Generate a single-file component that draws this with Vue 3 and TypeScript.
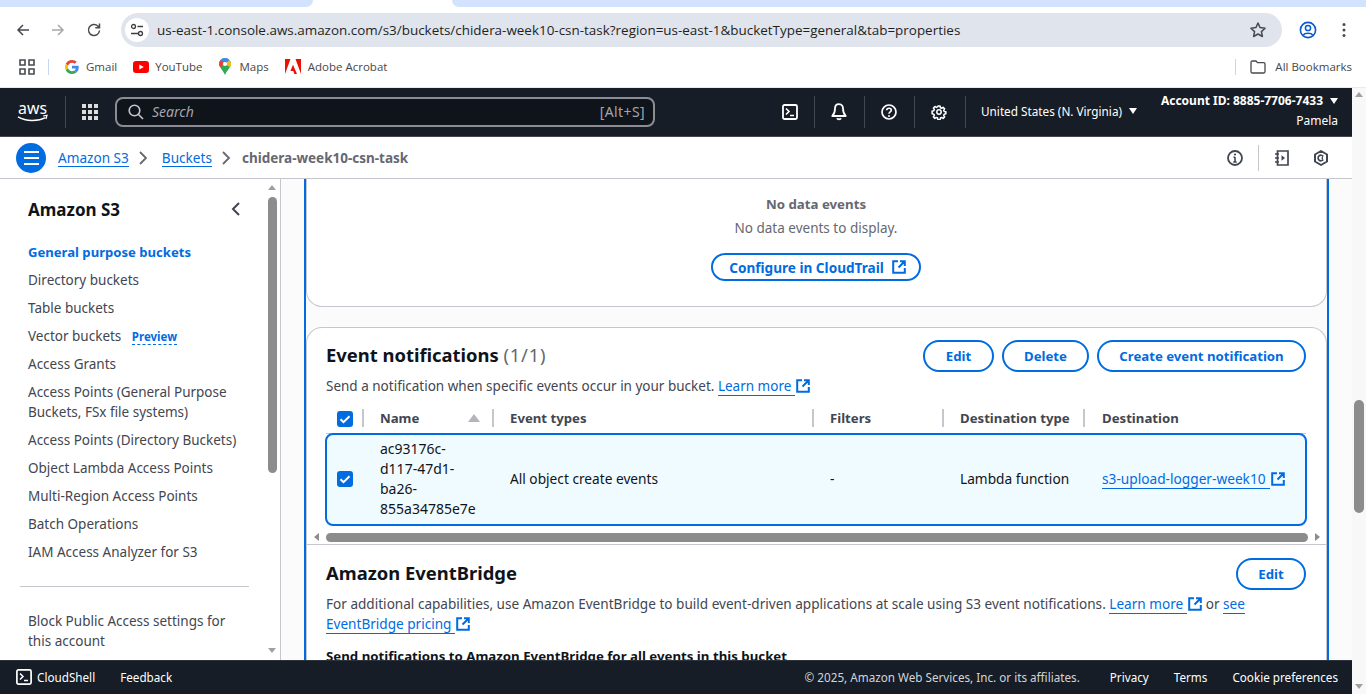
<script setup lang="ts">
const bookmarks = ['Gmail', 'YouTube', 'Maps', 'Adobe Acrobat']
const navA = ['Directory buckets', 'Table buckets']
const navB = [
  'Access Grants',
  'Access Points (General Purpose Buckets, FSx file systems)',
  'Access Points (Directory Buckets)',
  'Object Lambda Access Points',
  'Multi-Region Access Points',
  'Batch Operations',
  'IAM Access Analyzer for S3',
]
const heads = ['Event types', 'Filters', 'Destination type', 'Destination']
</script>

<template>
  <div class="page">
    <div class="tabs"><div class="tab-left"></div><div class="tab-active"></div><div class="tab-right"></div></div>
    <div class="toolbar">
      <svg class="nav-ic" width="16" height="16" viewBox="0 0 16 16"><path d="M14 8H3M8 3 3 8l5 5" fill="none" stroke="#474a4f" stroke-width="1.5"/></svg>
      <svg class="nav-ic" width="16" height="16" viewBox="0 0 16 16"><path d="M2 8h11M8 3l5 5-5 5" fill="none" stroke="#a6a8ab" stroke-width="1.5"/></svg>
      <svg class="nav-ic" width="16" height="16" viewBox="0 0 16 16"><path d="M13.500 8.500A5.500 5.500 0 1 1 11.800 4L13.500 5.600M13.500 1.500v4.200H9.300" fill="none" stroke="#474a4f" stroke-width="1.5"/></svg>
      <div class="omnibox">
        <span class="tune"><svg width="16" height="16" viewBox="0 0 16 16"><circle cx="4.500" cy="4.500" r="2" fill="none" stroke="#3c4043" stroke-width="1.300"/><path d="M8.500 4.500H14M2 11.500h7" stroke="#3c4043" stroke-width="1.300"/><circle cx="11.500" cy="11.500" r="2" fill="none" stroke="#3c4043" stroke-width="1.300"/></svg></span>
        <span class="url">us-east-1.console.aws.amazon.com/s3/buckets/chidera-week10-csn-task?region=us-east-1&amp;bucketType=general&amp;tab=properties</span>
        <svg class="star" width="18" height="18" viewBox="0 0 18 18"><path d="m9 2 2.100 4.600 5 .6-3.700 3.400 1 4.900L9 13l-4.400 2.500 1-4.900-3.700-3.400 5-.6z" fill="none" stroke="#474a4f" stroke-width="1.500" stroke-linejoin="round"/></svg>
      </div>
      <svg class="profile" width="18" height="18" viewBox="0 0 18 18"><circle cx="9" cy="9" r="7.600" fill="none" stroke="#0b57d0" stroke-width="1.600"/><circle cx="9" cy="7" r="2.600" fill="none" stroke="#0b57d0" stroke-width="1.500"/><path d="M4.500 14c1-2.400 8-2.400 9 0" fill="none" stroke="#0b57d0" stroke-width="1.500"/></svg>
      <svg class="kebab" width="4" height="16" viewBox="0 0 4 16"><circle cx="2" cy="2.500" r="1.500" fill="#474a4f"/><circle cx="2" cy="8" r="1.500" fill="#474a4f"/><circle cx="2" cy="13.500" r="1.500" fill="#474a4f"/></svg>
    </div>
    <div class="bookmarks">
      <svg class="apps" width="16" height="16" viewBox="0 0 16 16"><path d="M1 1h5v5H1zM10 1h5v5h-5zM1 10h5v5H1zM10 10h5v5h-5z" fill="none" stroke="#474a4f" stroke-width="1.600"/></svg>
      <span class="bm-sep"></span>
      <template v-for="(b, i) in bookmarks" :key="b">
        <span class="bm" :class="'bm' + i">
          <svg v-if="i === 0" width="14" height="14" viewBox="0 0 48 48"><path fill="#ea4335" d="M24 9.500c3.500 0 6.700 1.200 9.200 3.600l6.900-6.900C35.900 2.400 30.500 0 24 0 14.600 0 6.500 5.400 2.600 13.200l8 6.200C12.500 13.700 17.800 9.500 24 9.500z"/><path fill="#4285f4" d="M47 24.500c0-1.600-.1-3.100-.4-4.500H24v9h12.900c-.6 3-2.200 5.500-4.700 7.200l7.700 6C44.400 37.900 47 31.800 47 24.500z"/><path fill="#fbbc05" d="M10.500 28.600C10 27.200 9.800 25.600 9.800 24s.3-3.200.8-4.600l-8-6.200C1 16.400 0 20.100 0 24s1 7.600 2.600 10.800z"/><path fill="#34a853" d="M24 48c6.500 0 11.900-2.100 15.900-5.800l-7.700-6c-2.200 1.500-4.900 2.300-8.200 2.300-6.200 0-11.500-4.200-13.400-9.900l-8 6.200C6.500 42.600 14.600 48 24 48z"/></svg>
          <svg v-else-if="i === 1" width="16" height="12" viewBox="0 0 16 12"><rect width="16" height="12" rx="3" fill="#f00"/><path d="m6.300 3.400 4.500 2.600-4.500 2.600z" fill="#fff"/></svg>
          <svg v-else-if="i === 2" width="12" height="17" viewBox="0 0 12 17"><path d="M6 0a6 6 0 0 1 6 6c0 3.200-3.800 6-6 11C3.800 12 0 9.200 0 6a6 6 0 0 1 6-6z" fill="#34a853"/><path d="M1.500 1.900 6 6l-4.800 3C.4 8 0 7 0 6a6 6 0 0 1 1.500-4.100z" fill="#ea4335"/><path d="M1.500 1.900A6 6 0 0 1 6 0c1.800 0 3.300.8 4.400 2L6 6z" fill="#4285f4"/><path d="M10.400 2A6 6 0 0 1 12 6c0 1-.4 2-1 3L6 6z" fill="#fbbc05"/><circle cx="6" cy="6" r="2.100" fill="#fff"/></svg>
          <svg v-else width="16" height="16" viewBox="0 0 16 16"><path d="M0 0h5.500L0 15zM10.500 0H16v15zM8 5.800 12 15H9.400L8.200 12H5.400z" fill="#eb1000"/></svg>
          <span>{{ b }}</span>
        </span>
      </template>
      <span class="bm-right">
        <span class="bm-sep"></span>
        <svg class="folder" width="16" height="14" viewBox="0 0 16 14"><path d="M1 2.500C1 1.700 1.500 1 2.300 1h3.700l1.500 1.700h6.300c.7 0 1.200.6 1.200 1.300v7.500c0 .8-.5 1.500-1.200 1.500H2.300C1.500 13 1 12.300 1 11.500z" fill="none" stroke="#474a4f" stroke-width="1.300"/></svg>
        <span class="all">All Bookmarks</span>
      </span>
    </div>

    <div class="viewport">
      <div class="app">
        <header class="topbar">
          <svg class="aws" width="32" height="34" viewBox="0 -6 32 34">
            <text x="1" y="13" font-family="Noto Sans, sans-serif" font-size="16" fill="#fff" textLength="29" lengthAdjust="spacingAndGlyphs">aws</text>
            <path d="M1 15.800c8 4.800 20 4.800 27.500.8" fill="none" stroke="#fff" stroke-width="1.500"/>
            <path d="m26 15 4-.7-1 3.700" fill="none" stroke="#fff" stroke-width="1.200"/>
          </svg>
          <span class="tb-sep sep-a"></span>
          <svg class="grid9" width="16" height="16" viewBox="0 0 16 16" fill="#ddd"><rect width="4" height="4"/><rect x="6" width="4" height="4"/><rect x="12" width="4" height="4"/><rect y="6" width="4" height="4"/><rect x="6" y="6" width="4" height="4"/><rect x="12" y="6" width="4" height="4"/><rect y="12" width="4" height="4"/><rect x="6" y="12" width="4" height="4"/><rect x="12" y="12" width="4" height="4"/></svg>
          <div class="search">
            <svg width="16" height="16" viewBox="0 0 16 16"><circle cx="6.500" cy="6.500" r="5.300" fill="none" stroke="#c6c6cd" stroke-width="1.600"/><path d="m10.500 10.500 4.500 4.500" stroke="#c6c6cd" stroke-width="1.600"/></svg>
            <span class="s-label">Search</span>
            <span class="s-key">[Alt+S]</span>
          </div>
          <div class="tb-icons">
            <span class="tb-ic"><svg width="16" height="16" viewBox="0 0 16 16"><rect x="1" y="1" width="14" height="14" rx="1.500" fill="none" stroke="#fff" stroke-width="1.800"/><path d="m4 4.500 3 3-3 3M8 11.500h4" fill="none" stroke="#fff" stroke-width="1.600"/></svg></span>
            <span class="tb-ic sep"><svg width="16" height="18" viewBox="0 0 16 18"><path d="M8 1.200c-2.800 0-4 2-4 4.300 0 3.500-.7 5.500-2.700 7.500h13.400c-2-2-2.700-4-2.700-7.500 0-2.300-1.200-4.300-4-4.300zM6 15.200c.5 1.400 3.500 1.400 4 0" fill="none" stroke="#fff" stroke-width="1.800" stroke-linejoin="round"/></svg></span>
            <span class="tb-ic sep"><svg width="16" height="16" viewBox="0 0 16 16"><circle cx="8" cy="8" r="7" fill="none" stroke="#fff" stroke-width="1.700"/><path d="M5.700 6.200C5.800 3.500 10.300 3.500 10.300 6.200c0 1.800-2.300 1.700-2.300 3.600" fill="none" stroke="#fff" stroke-width="1.600"/><circle cx="8" cy="12" r="1" fill="#fff"/></svg></span>
            <span class="tb-ic sep"><svg width="16" height="16" viewBox="0 0 16 16"><path d="M6.700 1h2.600l.4 2 1.400.6 1.700-1.100 1.800 1.800-1.100 1.700.6 1.400 2 .4v2.400l-2 .4-.6 1.400 1.100 1.700-1.800 1.800-1.700-1.100-1.400.6-.4 2H6.700l-.4-2-1.400-.6-1.700 1.100-1.800-1.800 1.100-1.700-.6-1.400-2-.4V6.800l2-.4.6-1.400-1.100-1.700 1.800-1.800 1.700 1.100 1.400-.6z" transform="translate(1.200 1.200) scale(.85)" fill="none" stroke="#fff" stroke-width="1.800" stroke-linejoin="round"/><circle cx="8" cy="8" r="2.200" fill="none" stroke="#fff" stroke-width="1.500"/></svg></span>
            <span class="tb-sep"></span>
          </div>
          <div class="region">United States (N. Virginia)<i class="tri"></i></div>
          <div class="account">
            <div class="acc-id">Account ID: 8885-7706-7433<i class="tri"></i></div>
            <div class="acc-name">Pamela</div>
          </div>
        </header>

        <div class="crumbs">
          <span class="burger"><i></i><i></i><i></i></span>
          <a class="crumb">Amazon S3</a>
          <svg class="chev" width="10" height="16" viewBox="0 0 10 16"><path d="m2 2 6 6-6 6" fill="none" stroke="#656871" stroke-width="1.800"/></svg>
          <a class="crumb">Buckets</a>
          <svg class="chev chev2" width="10" height="16" viewBox="0 0 10 16"><path d="m2 2 6 6-6 6" fill="none" stroke="#656871" stroke-width="1.800"/></svg>
          <span class="crumb-cur">chidera-week10-csn-task</span>
          <span class="cr-right">
            <svg width="16" height="16" viewBox="0 0 16 16"><circle cx="8" cy="8" r="7" fill="none" stroke="#424650" stroke-width="1.800"/><path d="M8 7v5M6.500 7.200H8M6.300 12h3.400" fill="none" stroke="#424650" stroke-width="1.600"/><circle cx="8" cy="4.500" r="1.100" fill="#424650"/></svg>
            <span class="cr-sep"></span>
            <svg width="16" height="16" viewBox="0 0 16 16"><path d="M3.500 1H14v14H3.500zM1 4h4M1 8h4M1 12h4" fill="none" stroke="#424650" stroke-width="1.700"/><path d="M7.500 5.200 11 8l-3.500 2.800z" fill="#424650"/></svg>
            <svg class="cr-last" width="16" height="16" viewBox="0 0 16 16"><path d="M8 1 14 4.500v7L8 15l-6-3.500v-7z" fill="none" stroke="#424650" stroke-width="2" stroke-linejoin="round"/><path d="M10.200 6.400A2.800 2.800 0 1 0 10.200 9.600" fill="none" stroke="#424650" stroke-width="1.700"/><path d="M10 6.500 8 8l2 1.500" fill="#424650"/></svg>
          </span>
        </div>

        <div class="body">
          <aside class="sidebar">
            <div class="side-inner">
              <div class="side-head">
                <h2>Amazon S3</h2>
                <svg width="10" height="14" viewBox="0 0 10 14"><path d="M8 1 2 7l6 6" fill="none" stroke="#424650" stroke-width="2"/></svg>
              </div>
              <ul class="nav">
                <li class="active">General purpose buckets</li>
                <li v-for="n in navA" :key="n">{{ n }}</li>
                <li>Vector buckets <span class="preview">Preview</span></li>
                <li v-for="n in navB" :key="n">{{ n }}</li>
              </ul>
              <div class="side-div"></div>
              <div class="side-block">Block Public Access settings for<br>this account</div>
            </div>
            <div class="side-scroll">
              <i class="arr up"></i>
              <i class="thumb"></i>
              <i class="arr down"></i>
            </div>
          </aside>

          <main class="content">
            <div class="frame">
              <section class="card empty-card">
                <div class="em-title">No data events</div>
                <div class="em-text">No data events to display.</div>
                <button class="btn cfg">Configure in CloudTrail
                  <svg class="ext" width="14" height="14" viewBox="0 0 14 14"><path d="M6 1.200H1.200v11.600h11.600V8M8 1.200h4.800V6M12.500 1.500 6.500 7.500" fill="none" stroke="currentColor" stroke-width="2"/></svg>
                </button>
              </section>

              <section class="card ev-card">
                <div class="ev-head">
                  <h2 class="h2">Event notifications <span class="count">(1/1)</span></h2>
                  <div class="btns">
                    <button class="btn b-edit">Edit</button>
                    <button class="btn b-del">Delete</button>
                    <button class="btn b-create">Create event notification</button>
                  </div>
                </div>
                <p class="desc ev-desc">Send a notification when specific events occur in your bucket. <a class="lnk"><span class="u">Learn more</span><svg class="ext" width="14" height="14" viewBox="0 0 14 14"><path d="M6 1.200H1.200v11.600h11.600V8M8 1.200h4.800V6M12.500 1.500 6.500 7.500" fill="none" stroke="#006ce0" stroke-width="2"/></svg></a></p>
                <div class="thead grid">
                  <div class="cell c0"><span class="cb"><svg width="16" height="16" viewBox="0 0 16 16"><path d="m3.500 8.200 3 3 6-6" fill="none" stroke="#fff" stroke-width="2"/></svg></span></div>
                  <div class="cell th"><span>Name</span><i class="sort"></i></div>
                  <div v-for="h in heads" :key="h" class="cell th">{{ h }}</div>
                </div>
                <div class="trow grid">
                  <div class="cell c0"><span class="cb"><svg width="16" height="16" viewBox="0 0 16 16"><path d="m3.500 8.200 3 3 6-6" fill="none" stroke="#fff" stroke-width="2"/></svg></span></div>
                  <div class="cell td nm">ac93176c-<br>d117-47d1-<br>ba26-<br>855a34785e7e</div>
                  <div class="cell td">All object create events</div>
                  <div class="cell td">-</div>
                  <div class="cell td">Lambda function</div>
                  <div class="cell td"><a class="lnk"><span class="u">s3-upload-logger-week10</span><svg class="ext" width="14" height="14" viewBox="0 0 14 14"><path d="M6 1.200H1.200v11.600h11.600V8M8 1.200h4.800V6M12.500 1.500 6.500 7.500" fill="none" stroke="#006ce0" stroke-width="2"/></svg></a></div>
                </div>
                <div class="hscroll"><i class="h-l"></i><i class="h-thumb"></i><i class="h-r"></i></div>
                <div class="ev-rule"></div>
                <div class="eb-head">
                  <h2 class="h2">Amazon EventBridge</h2>
                  <button class="btn b-edit2">Edit</button>
                </div>
                <p class="desc eb-desc">For additional capabilities, use Amazon EventBridge to build event-driven applications at scale using S3 event notifications. <a class="lnk"><span class="u">Learn more</span><svg class="ext" width="14" height="14" viewBox="0 0 14 14"><path d="M6 1.200H1.200v11.600h11.600V8M8 1.200h4.800V6M12.500 1.500 6.500 7.500" fill="none" stroke="#006ce0" stroke-width="2"/></svg></a> or <a class="lnk"><span class="u plain">see</span></a><br><a class="lnk"><span class="u">EventBridge pricing</span><svg class="ext" width="14" height="14" viewBox="0 0 14 14"><path d="M6 1.200H1.200v11.600h11.600V8M8 1.200h4.800V6M12.500 1.500 6.500 7.500" fill="none" stroke="#006ce0" stroke-width="2"/></svg></a></p>
                <div class="eb-strong">Send notifications to Amazon EventBridge for all events in this bucket</div>
              </section>
            </div>
          </main>
        </div>

        <footer class="footer">
          <svg width="16" height="16" viewBox="0 0 16 16"><rect x=".9" y=".9" width="14.200" height="14.200" rx="1.500" fill="none" stroke="#fff" stroke-width="1.700"/><path d="m4 4.500 3 3-3 3M8 11.500h4" fill="none" stroke="#fff" stroke-width="1.500"/></svg>
          <span class="f-cs">CloudShell</span>
          <span class="f-fb">Feedback</span>
          <span class="f-right">
            <span class="copy">© 2025, Amazon Web Services, Inc. or its affiliates.</span>
            <span>Privacy</span><span>Terms</span><span>Cookie preferences</span>
          </span>
        </footer>
      </div>
      <div class="page-scroll">
        <i class="ps-up"></i>
        <i class="ps-thumb"></i>
        <i class="ps-down"></i>
      </div>
    </div>
  </div>
</template>

<style>
html, body { margin: 0; overflow: hidden; background: #fff; }
</style>

<style scoped>
.page { width: 1366px; height: 694px; display: flex; flex-direction: column; overflow: hidden; font-family: "Noto Sans", sans-serif; color: #0f141a; }
button { font-family: inherit; }
h2, p, ul { margin: 0; padding: 0; }
i { display: block; font-style: normal; }

.tabs { height: 7px; display: flex; background: #fff; flex: none; }
.tab-left { width: 313px; background: #d3e3fd; border-bottom-right-radius: 8px; }
.tab-active { width: 139px; background: #fff; }
.tab-right { flex: 1; background: #d3e3fd; border-bottom-left-radius: 8px; }

.toolbar { height: 46px; flex: none; display: flex; align-items: center; padding-left: 15px; }
.nav-ic { margin-right: 19px; }
.nav-ic:nth-child(2) { margin-right: 20px; }
.nav-ic:nth-child(3) { margin-right: 19px; }
.omnibox { width: 1161px; height: 34px; border-radius: 17px; background: #e0e5ed; display: flex; align-items: center; padding-left: 4px; box-sizing: border-box; }
.tune { width: 24px; height: 24px; border-radius: 50%; background: #fff; display: flex; align-items: center; justify-content: center; }
.url { margin-left: 8px; font-family: "Open Sans", sans-serif; font-size: 13.45px; color: #1f1f1f; white-space: nowrap; flex: 1; }
.star { margin-right: 15px; }
.profile { margin-left: 17px; }
.kebab { margin-left: 25px; }

.bookmarks { height: 35px; flex: none; display: flex; align-items: center; padding: 0 0 7px 19px; font-family: "Open Sans", sans-serif; font-size: 11.5px; color: #474747; border-bottom: 1px solid #e8eaed; box-sizing: border-box; }
.bm-sep { width: 1px; height: 16px; background: #c7d7f2; margin-left: 13px; }
.bm { display: inline-flex; align-items: center; gap: 7px; white-space: nowrap; }
.bm0 { margin-left: 16px; }
.bm1 { margin-left: 16px; gap: 6px; }
.bm2 { margin-left: 16px; gap: 9px; }
.bm3 { margin-left: 16px; gap: 7px; }
.bm-right { margin-left: auto; display: flex; align-items: center; padding-right: 14px; }
.folder { margin-left: 14px; }
.all { margin-left: 9px; }

.viewport { flex: 1; min-height: 0; display: flex; }
.app { width: 1352px; flex: none; display: flex; flex-direction: column; min-height: 0; }

.topbar { height: 49px; flex: none; background: #161d26; border-bottom: 1px solid #424650; box-sizing: border-box; display: flex; align-items: center; color: #fff; padding-left: 17px; }
.aws { flex: none; }
.tb-sep { width: 1px; height: 32px; background: #424650; display: block; }
.sep-a { margin-left: 16px; }
.grid9 { margin-left: 16px; }
.search { margin-left: 17px; width: 540px; height: 30px; box-sizing: border-box; border: 2px solid #8c8c94; border-radius: 8px; background: #0f141a; display: flex; align-items: center; padding: 0 8px 0 11px; color: #a4a4ad; font-size: 14px; }
.s-label { margin: -2px 0 0 8px; font-style: italic; }
.s-key { margin: -2px 0 0 auto; letter-spacing: .4px; }
.tb-icons { display: flex; align-items: center; margin-left: 110px; }
.tb-ic { width: 50px; height: 32px; display: flex; align-items: center; justify-content: center; margin-left: -1px; }
.tb-ic:first-child { margin-left: 0; }
.tb-ic.sep { border-left: 1px solid #424650; width: 48px; padding-right: 2px; }
.region { margin: -2px 0 0 15px; font-size: 11.75px; white-space: nowrap; display: flex; align-items: center; gap: 7px; color: #fff; }
.tri { width: 0; height: 0; border-left: 4px solid transparent; border-right: 4px solid transparent; border-top: 6px solid #fff; display: inline-block; }
.account { margin-left: auto; padding-right: 14px; text-align: right; font-size: 12px; }
.acc-id { font-weight: 700; display: flex; align-items: center; gap: 7px; line-height: 18px; white-space: nowrap; margin-top: -1px; }
.acc-name { line-height: 21px; }

.crumbs { height: 42px; flex: none; background: #fff; border-bottom: 1px solid #c6c6cd; box-sizing: border-box; display: flex; align-items: center; padding-left: 16px; font-size: 13.6px; }
.burger { width: 30px; height: 30px; border-radius: 50%; background: #006ce0; display: flex; flex-direction: column; align-items: center; justify-content: center; gap: 4px; }
.burger i { width: 15px; height: 2px; background: #fff; }
.crumb { color: #006ce0; border-bottom: 1px solid #006ce0; line-height: 17px; white-space: nowrap; }
.crumb:nth-of-type(1) { margin-left: 12px; }
.chev { margin: 0 14px 0 9px; }
.chev2 { margin-right: 11px; }
.crumb-cur { font-weight: 700; font-size: 13.5px; color: #656871; white-space: nowrap; }
.cr-right { margin-left: auto; display: flex; align-items: center; padding-right: 23px; }
.cr-sep { width: 1px; height: 26px; background: #c6c6cd; margin: 0 15px 0 15px; }
.cr-last { margin-left: 23px; }

.body { flex: 1; min-height: 0; display: flex; }
.sidebar { width: 281px; flex: none; border-right: 1px solid #c6c6cd; box-sizing: border-box; position: relative; overflow: hidden; background: #fff; }
.side-inner { padding: 19px 0 0 28px; width: 225px; font-size: 13.5px; color: #424650; box-sizing: content-box; }
.side-head { display: flex; align-items: center; justify-content: space-between; height: 22px; }
.side-head h2 { font-size: 17px; font-weight: 700; color: #0f141a; white-space: nowrap; }
.side-head svg { margin-right: 12px; }
.nav { list-style: none; margin-top: 18px; }
.nav li { padding: 4px 0; line-height: 20px; }
.nav li.active { color: #006ce0; font-weight: 700; font-size: 13.1px; }
.preview { display: inline-block; line-height: 14px; color: #006ce0; font-size: 11.5px; font-weight: 700; border-bottom: 1px dashed #006ce0; margin-left: 7px; }
.side-div { height: 1px; background: #c6c6cd; margin: 20px 0 0 -8px; width: 229px; }
.side-block { margin-top: 24px; line-height: 20px; white-space: nowrap; }
.side-scroll { position: absolute; top: 0; bottom: 0; left: 268px; width: 9px; background: #fff; }
.arr { position: absolute; left: 0; width: 0; height: 0; border-left: 4.500px solid transparent; border-right: 4.500px solid transparent; }
.arr.up { top: 6px; border-bottom: 5px solid #a0a0a0; }
.arr.down { bottom: 7px; border-top: 5px solid #a0a0a0; }
.thumb { position: absolute; top: 18px; left: 0; width: 9px; height: 276px; border-radius: 5px; background: #8c8c8c; }

.content { flex: 1; min-width: 0; background: #fbfbfb; overflow: hidden; padding: 0 23px; }
.frame { border-left: 2px solid #006ce0; border-right: 2px solid #006ce0; height: 100%; box-sizing: border-box; overflow: hidden; }
.card { background: #fff; border: 1px solid #c6c6cd; box-sizing: border-box; }
.empty-card { height: 128px; border-top: none; border-radius: 0 0 16px 16px; display: flex; flex-direction: column; align-items: center; padding: 15px 1px 0 0; color: #656871; font-size: 13.5px; }
.em-title { font-size: 13.25px; font-weight: 700; line-height: 20px; }
.em-text { line-height: 20px; margin-top: 4px; }
.btn { border: 2px solid #006ce0; border-radius: 20px; background: #fff; color: #006ce0; font-size: 13.2px; font-weight: 700; height: 32px; padding: 0; white-space: nowrap; box-sizing: border-box; display: inline-flex; align-items: center; justify-content: center; }
.cfg { margin-top: 15px; width: 210px; height: 28px; font-size: 13.6px; padding-left: 3px; }
.cfg .ext { margin-left: 8px; }
.ev-card { margin-top: 20px; border-radius: 16px 16px 0 0; padding: 0 20px 0 19px; height: 340px; border-bottom: none; }
.ev-head { display: flex; justify-content: space-between; align-items: flex-start; padding-top: 12px; }
.h2 { font-size: 18.4px; font-weight: 700; line-height: 30px; color: #0f141a; white-space: nowrap; }
.count { font-weight: 400; color: #656871; letter-spacing: .8px; }
.btns { display: flex; gap: 8px; }
.b-edit { width: 71px; }
.b-del { width: 87px; }
.b-create { width: 209px; }
.desc { font-size: 13.55px; line-height: 20px; color: #424650; margin-top: 4px; white-space: nowrap; }
.ev-desc { font-size: 13.5px; }
.lnk { color: #006ce0; white-space: nowrap; }
.u { border-bottom: 1px solid #006ce0; padding-right: 4px; }
.u.plain { padding-right: 0; }
.lnk .ext { vertical-align: -2px; margin-left: 1px; }
.grid { display: grid; grid-template-columns: 38px 130px 320px 130px 141px 1fr; }
.thead { height: 28px; margin-top: 9px; border-bottom: 1px solid #c6c6cd; box-sizing: content-box; }
.cell { display: flex; align-items: center; box-sizing: border-box; padding-left: 16px; position: relative; font-size: 13.7px; }
.c0 { padding-left: 11px; }
.th { font-weight: 700; color: #424650; white-space: nowrap; font-size: 13.2px; padding-bottom: 2px; }
.th:last-child { padding-left: 17px; }
.thead .cell + .cell::before { content: ""; position: absolute; left: -2px; top: 4px; height: 18px; width: 2px; background: #c6c6cd; }
.cb { width: 16px; height: 16px; background: #006ce0; border-radius: 3px; display: block; }
.cb svg { display: block; }
.sort { position: absolute; right: 14px; top: 9px; width: 0; height: 0; border-left: 6px solid transparent; border-right: 6px solid transparent; border-bottom: 8px solid #b4b4bb; }
.trow { height: 93px; border: 2px solid #006ce0; border-radius: 8px; background: #f0fbff; margin-top: -1px; margin-left: -1px; padding-bottom: 2px; box-sizing: border-box; width: 982px; }
.trow .c0 { padding-left: 10px; }
.trow .cell:not(.c0):not(:last-child) { padding-left: 15px; }
.td { color: #0f141a; line-height: 20px; white-space: nowrap; }
.nm { font-size: 14px; }
.hscroll { height: 9px; margin-top: 7px; position: relative; }
.h-thumb { position: absolute; left: 0; right: -2px; top: 0; height: 9px; border-radius: 5px; background: #8c8c8c; }
.h-l { position: absolute; left: -12px; top: 0; border-top: 4.500px solid transparent; border-bottom: 4.500px solid transparent; border-right: 5px solid #8c8c8c; width: 0; height: 0; }
.h-r { position: absolute; right: -14px; top: 0; border-top: 4.500px solid transparent; border-bottom: 4.500px solid transparent; border-left: 5px solid #8c8c8c; width: 0; height: 0; }
.ev-rule { height: 1px; background: #c6c6cd; margin: 2px -20px 0 -19px; }
.eb-head { display: flex; justify-content: space-between; align-items: flex-start; padding-top: 13px; }
.b-edit2 { width: 70px; height: 32px; }
.eb-desc { margin-top: 4px; font-size: 13.58px; }
.eb-strong { font-weight: 700; font-size: 13.25px; margin-top: 12px; line-height: 20px; color: #0f141a; white-space: nowrap; }

.footer { height: 34px; flex: none; background: #161d26; color: #fff; font-size: 11.7px; display: flex; align-items: center; padding: 0 0 1px 16px; border-top: 1px solid #2a323c; box-sizing: border-box; white-space: nowrap; }
.f-cs { margin-left: 5px; }
.f-fb { margin-left: 25px; }
.f-right { margin-left: auto; display: flex; gap: 25px; padding-right: 14px; }
.copy { color: #d1d5db; margin-right: 5px; }

.page-scroll { flex: 1; background: #f8f8f8; position: relative; }
.ps-up { position: absolute; top: 4px; left: 3px; width: 0; height: 0; border-left: 4.500px solid transparent; border-right: 4.500px solid transparent; border-bottom: 5px solid #a0a0a0; }
.ps-down { position: absolute; bottom: 5px; left: 3px; width: 0; height: 0; border-left: 4.500px solid transparent; border-right: 4.500px solid transparent; border-top: 5px solid #a0a0a0; }
.ps-thumb { position: absolute; top: 312px; left: 2px; width: 10px; height: 113px; border-radius: 5px; background: #8c8c8c; }
</style>
